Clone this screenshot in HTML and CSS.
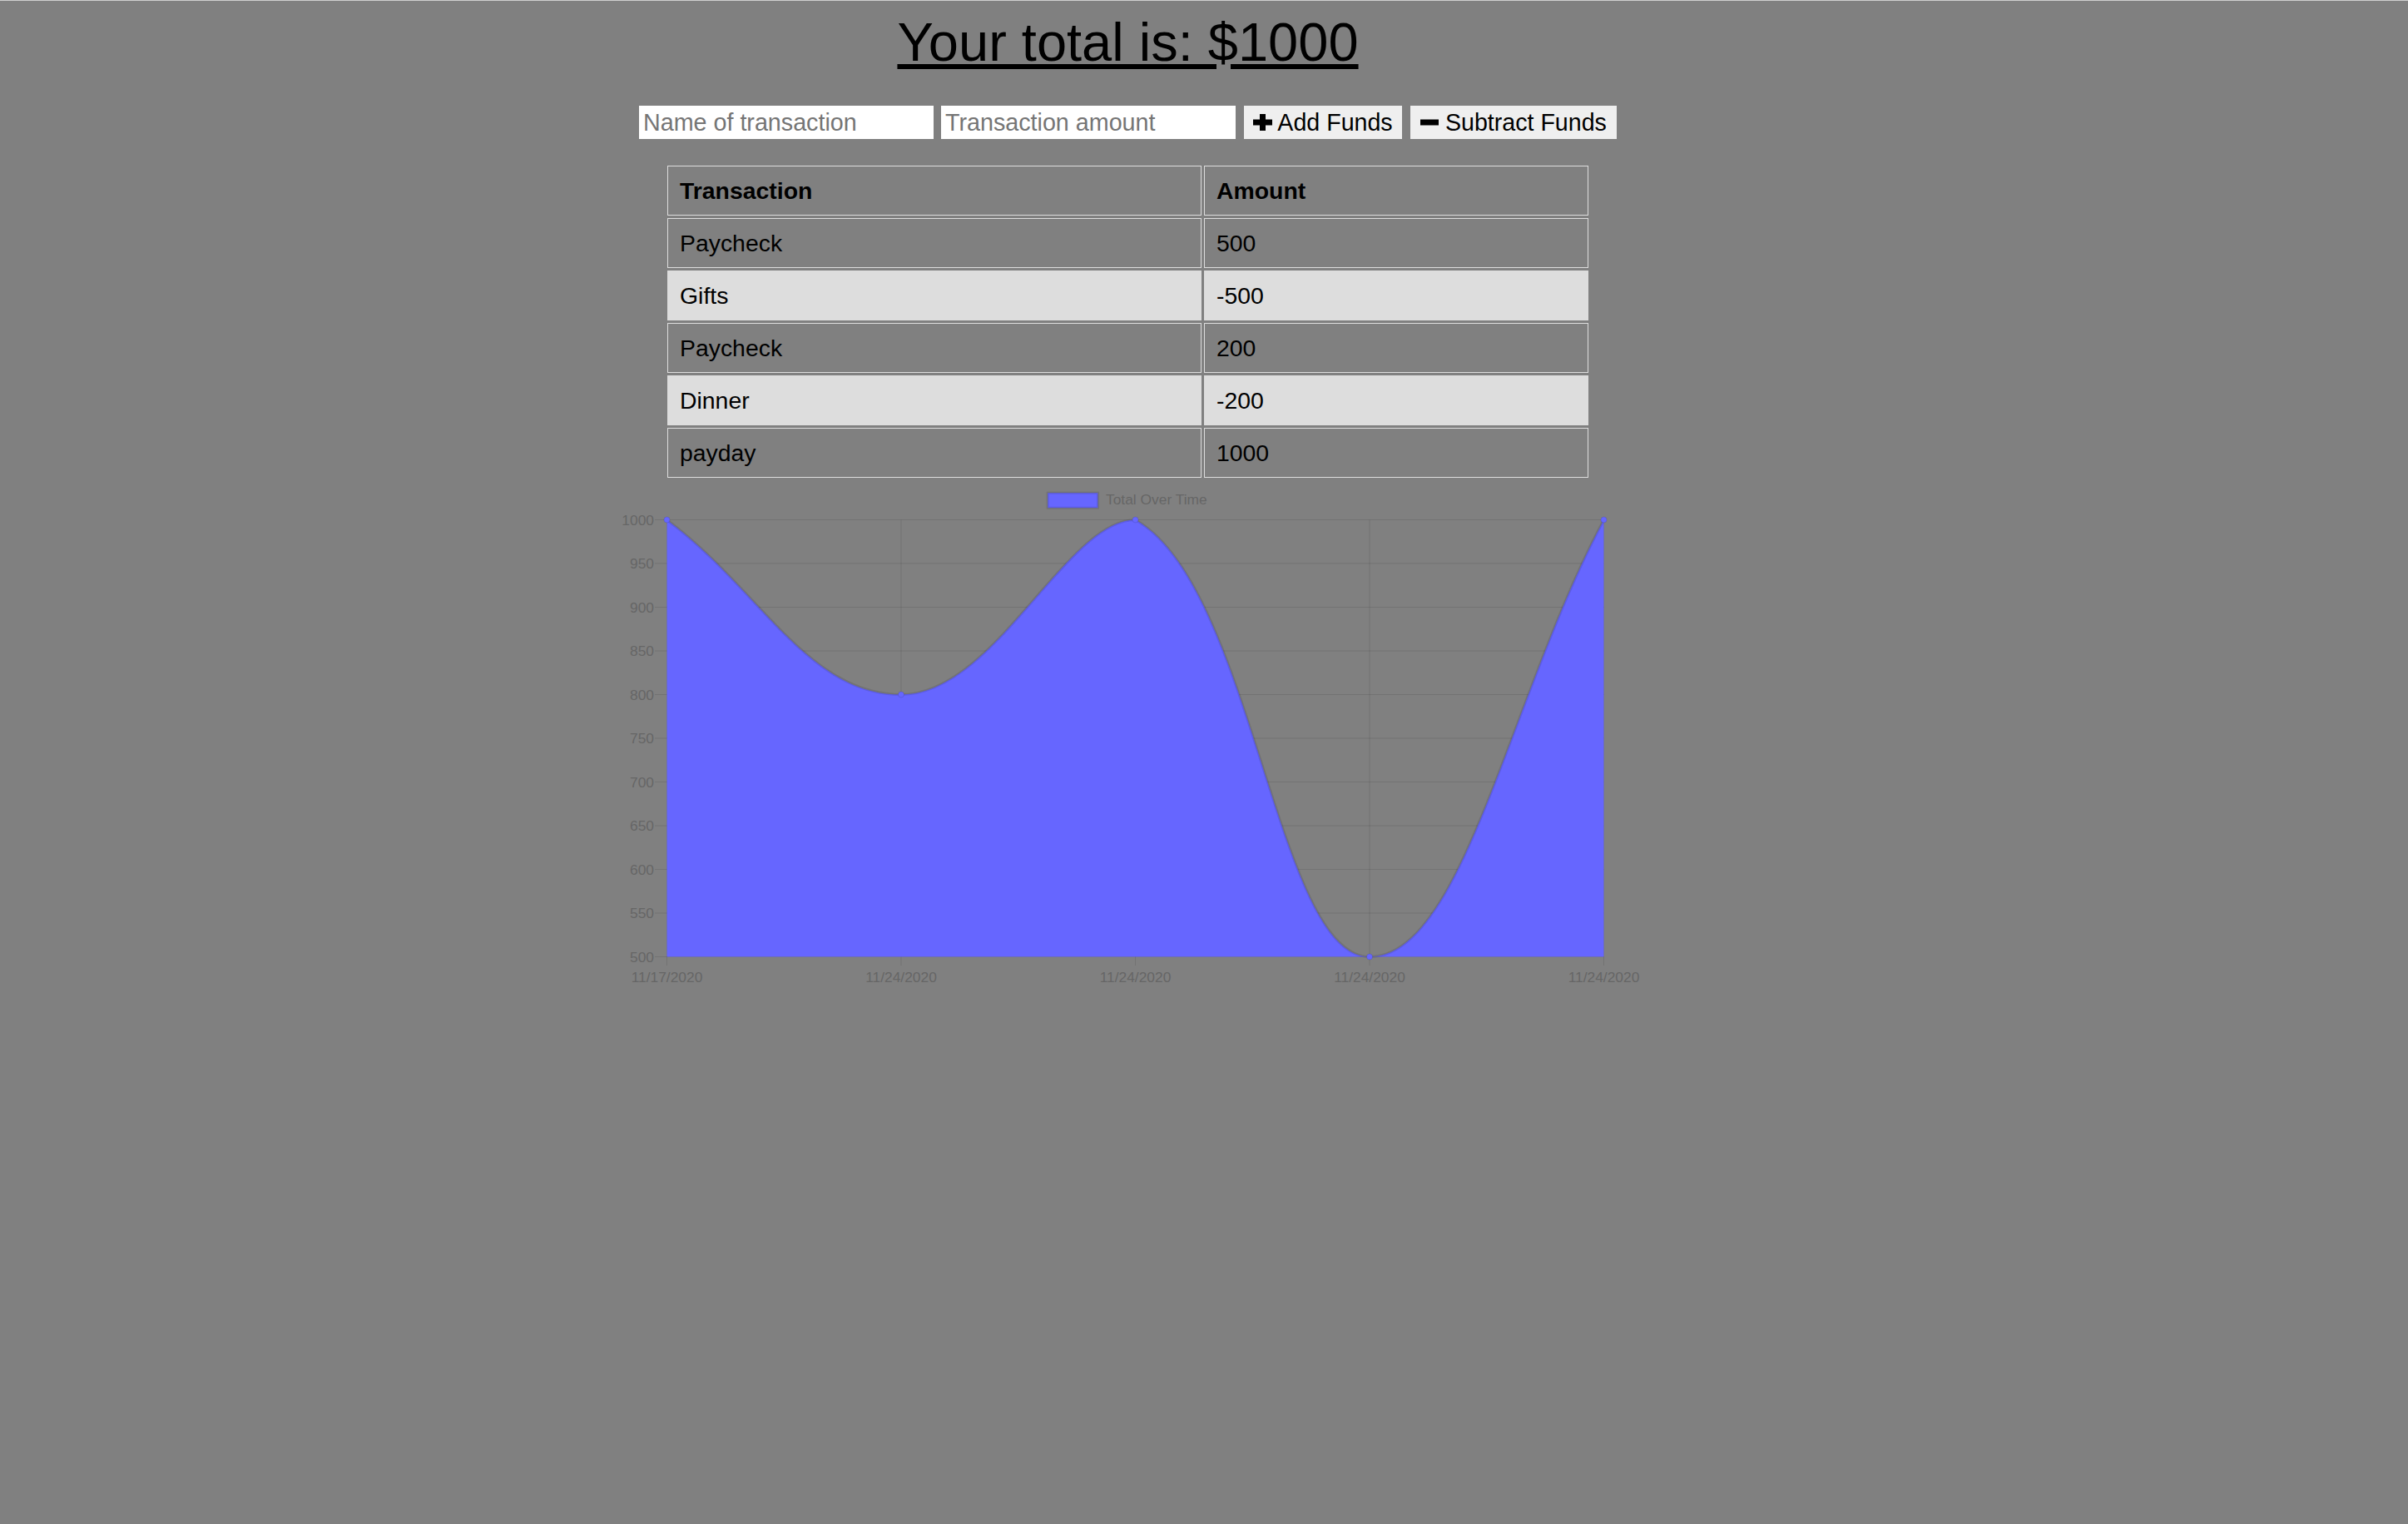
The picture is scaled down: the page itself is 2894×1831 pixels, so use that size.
FILE: index.html
```
<!DOCTYPE html>
<html>
<head>
<meta charset="utf-8">
<title>Budget Tracker</title>
<link rel="stylesheet" href="styles.css">
</head>
<body>
<div class="page">
  <h1 class="title">Your total is: $1000</h1>

  <form class="entry">
    <input class="field" type="text" placeholder="Name of transaction">
    <input class="field" type="number" placeholder="Transaction amount">
    <button type="button" class="btn btn-add"><svg class="ico" width="23" height="20" viewBox="0 0 23 20"><path d="M8 0h7v6.5h8v7h-8V20H8v-6.5H0v-7h8z" fill="#000"/></svg> Add Funds</button>
    <button type="button" class="btn btn-sub"><svg class="ico" width="22" height="20" viewBox="0 0 22 20"><rect x="0" y="6.5" width="22" height="7" fill="#000"/></svg> Subtract Funds</button>
  </form>

  <table class="tx">
    <thead>
      <tr><th class="c1">Transaction</th><th class="c2">Amount</th></tr>
    </thead>
    <tbody>
      <tr><td>Paycheck</td><td>500</td></tr>
      <tr><td>Gifts</td><td>-500</td></tr>
      <tr><td>Paycheck</td><td>200</td></tr>
      <tr><td>Dinner</td><td>-200</td></tr>
      <tr><td>payday</td><td>1000</td></tr>
    </tbody>
  </table>

  <svg class="chart" width="1280" height="620" viewBox="715 577 1280 620">
    <g class="grid">
      <line x1="786" y1="624.5" x2="1926.5" y2="624.5"/>
      <line x1="786" y1="677" x2="1926.5" y2="677"/>
      <line x1="786" y1="729.5" x2="1926.5" y2="729.5"/>
      <line x1="786" y1="782" x2="1926.5" y2="782"/>
      <line x1="786" y1="834.5" x2="1926.5" y2="834.5"/>
      <line x1="786" y1="887" x2="1926.5" y2="887"/>
      <line x1="786" y1="939.5" x2="1926.5" y2="939.5"/>
      <line x1="786" y1="992" x2="1926.5" y2="992"/>
      <line x1="786" y1="1044.5" x2="1926.5" y2="1044.5"/>
      <line x1="786" y1="1097" x2="1926.5" y2="1097"/>
      <line x1="786" y1="1149.5" x2="1926.5" y2="1149.5"/>
      <line x1="800.5" y1="624.5" x2="800.5" y2="1160"/>
      <line x1="1082" y1="624.5" x2="1082" y2="1160"/>
      <line x1="1363.5" y1="624.5" x2="1363.5" y2="1160"/>
      <line x1="1645" y1="624.5" x2="1645" y2="1160"/>
      <line x1="1926.5" y1="624.5" x2="1926.5" y2="1160"/>
    </g>
    <path class="area" d="M800.5,624.5 C913.1,708.5 969.4,834.5 1082,834.5 C1194.6,834.5 1280,624.5 1363.5,624.5 C1505.1,703.8 1532.4,1149.5 1645,1149.5 C1757.6,1149.5 1813.9,834.5 1926.5,624.5 L1926.5,1149.5 L800.5,1149.5 Z"/>
    <path class="curve" d="M800.5,624.5 C913.1,708.5 969.4,834.5 1082,834.5 C1194.6,834.5 1280,624.5 1363.5,624.5 C1505.1,703.8 1532.4,1149.5 1645,1149.5 C1757.6,1149.5 1813.9,834.5 1926.5,624.5"/>
    <g class="pts">
      <circle cx="800.5" cy="624.5" r="3.5"/>
      <circle cx="1082" cy="834.5" r="3.5"/>
      <circle cx="1363.5" cy="624.5" r="3.5"/>
      <circle cx="1645" cy="1149.5" r="3.5"/>
      <circle cx="1926.5" cy="624.5" r="3.5"/>
    </g>
    <g class="ylab">
      <text x="785" y="630.8">1000</text>
      <text x="785" y="683.3">950</text>
      <text x="785" y="735.8">900</text>
      <text x="785" y="788.3">850</text>
      <text x="785" y="840.8">800</text>
      <text x="785" y="893.3">750</text>
      <text x="785" y="945.8">700</text>
      <text x="785" y="998.3">650</text>
      <text x="785" y="1050.8">600</text>
      <text x="785" y="1103.3">550</text>
      <text x="785" y="1155.8">500</text>
    </g>
    <g class="xlab">
      <text x="800.5" y="1180">11/17/2020</text>
      <text x="1082" y="1180">11/24/2020</text>
      <text x="1363.5" y="1180">11/24/2020</text>
      <text x="1645" y="1180">11/24/2020</text>
      <text x="1926.5" y="1180">11/24/2020</text>
    </g>
    <rect class="lbox" x="1258.2" y="592.2" width="60.3" height="18"/>
    <text class="ltext" x="1328" y="606">Total Over Time</text>
  </svg>
</div>
</body>
</html>
```
FILE: styles.css
```
html, body {
  margin: 0;
  padding: 0;
  background: #808080;
}

body {
  border-top: 1px solid #cfcfcf;
  min-height: 1830px;
  font-family: "Liberation Sans", Arial, sans-serif;
  color: #000;
}

.page {
  width: 2711px;
  display: flex;
  flex-direction: column;
  align-items: center;
}

.title {
  margin: 14px 0 0;
  font-size: 65px;
  line-height: 72px;
  font-weight: normal;
  text-decoration: underline;
}

.entry {
  margin: 40px 0 0;
  display: flex;
  gap: 9px;
  height: 40px;
}

.field {
  width: 354px;
  height: 40px;
  box-sizing: border-box;
  border: none;
  background: #fff;
  padding: 0 5px;
  margin: 0;
  font-family: "Liberation Sans", Arial, sans-serif;
  font-size: 28.7px;
  color: #000;
  outline: none;
  -moz-appearance: textfield;
}

.field::-webkit-outer-spin-button,
.field::-webkit-inner-spin-button {
  -webkit-appearance: none;
  margin: 0;
}

.field::placeholder {
  color: #757575;
}

.btn {
  height: 40px;
  box-sizing: border-box;
  border: none;
  background: #efefef;
  margin: 0 0 0 1px;
  padding: 0 0 0 11px;
  text-align: left;
  font-family: "Liberation Sans", Arial, sans-serif;
  font-size: 28.6px;
  color: #000;
  white-space: nowrap;
}

.btn-add {
  width: 190px;
}

.btn-sub {
  width: 248px;
  padding-left: 12px;
}

.ico {
  vertical-align: 0;
}

.tx {
  margin-top: 29px;
  width: 1113px;
  border-collapse: separate;
  border-spacing: 3px;
  font-size: 28.4px;
}

.tx th,
.tx td {
  border: 1px solid #dddddd;
  padding: 13px 14px;
  line-height: 32px;
  text-align: left;
  height: 32px;
}

.tx th {
  font-weight: bold;
}

.tx .c1 {
  width: 612px;
}

.tx tbody tr:nth-child(even) td {
  background: #dddddd;
}

.chart {
  display: block;
  font-family: "Liberation Sans", Arial, sans-serif;
}

.grid line {
  stroke: rgba(0, 0, 0, 0.1);
  stroke-width: 1;
}

.area {
  fill: #6666ff;
}

.curve {
  fill: none;
  stroke: rgba(0, 0, 0, 0.1);
  stroke-width: 3;
}

.pts circle {
  fill: #6666ff;
  stroke: rgba(0, 0, 0, 0.1);
  stroke-width: 1;
}

.ylab text {
  fill: #666;
  font-size: 17.4px;
  text-anchor: end;
}

.xlab text {
  fill: #666;
  font-size: 17.4px;
  text-anchor: middle;
}

.lbox {
  fill: #6666ff;
  stroke: rgba(0, 0, 0, 0.1);
  stroke-width: 3;
}

.ltext {
  fill: #666;
  font-size: 17.4px;
}
```
